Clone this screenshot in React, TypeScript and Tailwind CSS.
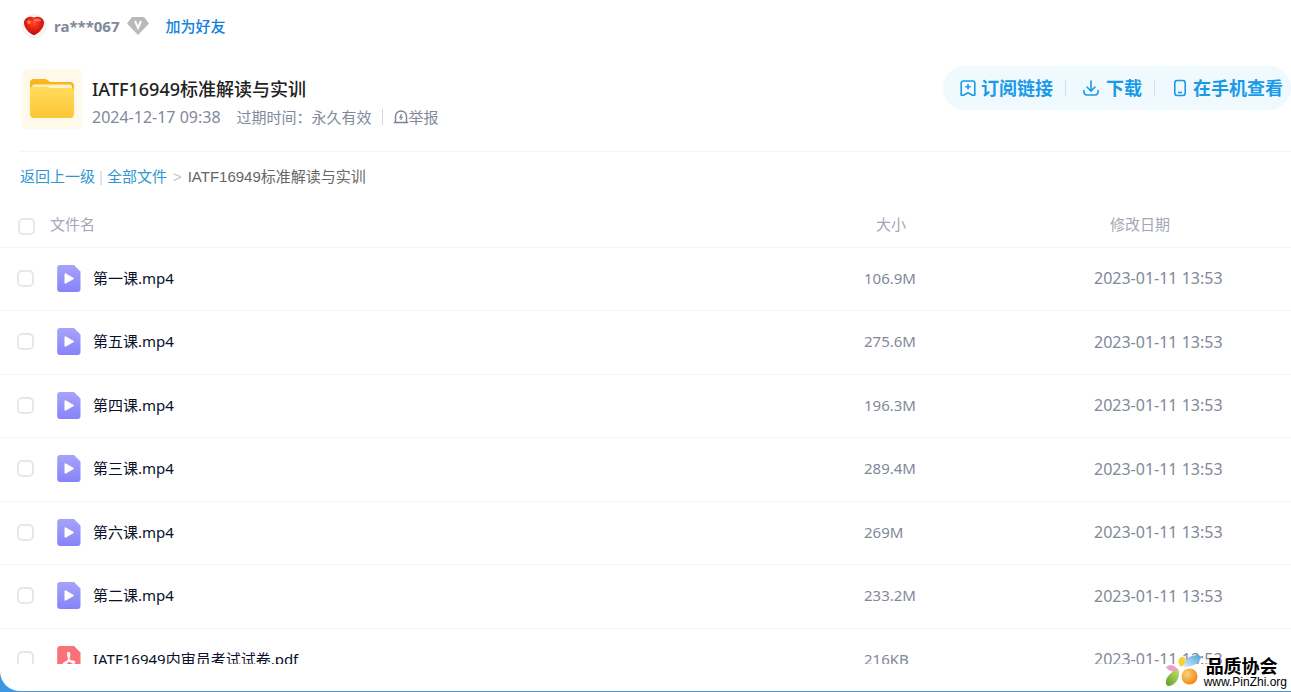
import React from "react";

const files = [
  { name: "第一课.mp4", size: "106.9M", date: "2023-01-11 13:53", type: "video" },
  { name: "第五课.mp4", size: "275.6M", date: "2023-01-11 13:53", type: "video" },
  { name: "第四课.mp4", size: "196.3M", date: "2023-01-11 13:53", type: "video" },
  { name: "第三课.mp4", size: "289.4M", date: "2023-01-11 13:53", type: "video" },
  { name: "第六课.mp4", size: "269M", date: "2023-01-11 13:53", type: "video" },
  { name: "第二课.mp4", size: "233.2M", date: "2023-01-11 13:53", type: "video" },
  { name: "IATF16949内审员考试试卷.pdf", size: "216KB", date: "2023-01-11 13:53", type: "pdf" },
];

function Avatar() {
  return (
    <svg viewBox="0 0 24 24" className="h-6 w-6">
      <defs>
        <radialGradient id="heart" cx="50%" cy="35%" r="65%">
          <stop offset="0" stopColor="#ff4a2a" />
          <stop offset="0.6" stopColor="#e01a12" />
          <stop offset="1" stopColor="#a80f0c" />
        </radialGradient>
      </defs>
      <circle cx="12" cy="12" r="11.5" fill="#fdf8f7" stroke="#e9e4e4" strokeWidth="0.8" />
      <path d="M12 21.2C8 20 1.8 14.5 2 8.6 2.2 4 7.500 1.400 12 3.400 16.500 1.400 21.800 4 22 8.600 22.200 14.500 16 20 12 21.200z" fill="url(#heart)" />
      <path d="M7 5.300l.8 1.700 1.800.2-1.300 1.300.3 1.800L7 9.400l-1.600.9.3-1.800-1.300-1.300 1.800-.2z" fill="#f8912a" />
      <path d="M10.500 4.600h1M11.800 6.400h1M11.800 8.400h1" stroke="#f8912a" strokeWidth="0.8" />
      <ellipse cx="15.500" cy="6" rx="3.500" ry="1.600" fill="#fff" opacity="0.3" />
    </svg>
  );
}

function VipBadge() {
  return (
    <svg viewBox="0 0 24 20" className="h-5 w-6">
      <path d="M6 1h12l5 6.500L12 19 1 7.500z" fill="#b9b9b9" />
      <path d="M9 5l3 7 3-7" fill="none" stroke="#fff" strokeWidth="2" />
    </svg>
  );
}

function FolderIcon() {
  return (
    <svg viewBox="0 0 46 40" className="h-10 w-[46px]">
      <defs>
        <linearGradient id="folder" x1="0" y1="0" x2="0" y2="1">
          <stop offset="0" stopColor="#ffdc5e" />
          <stop offset="1" stopColor="#fdc634" />
        </linearGradient>
      </defs>
      <path d="M1 4a4 4 0 0 1 4-4h10c2 0 3 .6 4.500 1.800C20.500 2.700 21 3 23 3h18a4 4 0 0 1 4 4v10H1z" fill="#fbb51c" />
      <path d="M3 8q0-2.500 3-2.500h34q3 0 3 2.500v6H3z" fill="#fff2c4" />
      <path d="M1 10q0-2.500 2.500-2.500H17c2 0 2.500 1.500 4.500 1.500H42q3 0 3 2.500V35a4 4 0 0 1-4 4H5a4 4 0 0 1-4-4z" fill="url(#folder)" />
    </svg>
  );
}

function ReportIcon() {
  return (
    <svg viewBox="0 0 16 16" className="h-4 w-4" fill="none" stroke="#7c8494" strokeWidth="1.4">
      <path d="M2.500 13V7.500a5.500 5.500 0 0 1 11 0V13M.8 13.500h14.400" />
      <path d="M8.600 5L7 8.400h2L7.600 11" strokeWidth="1.2" />
    </svg>
  );
}

function SubscribeIcon() {
  return (
    <svg viewBox="0 0 18 18" className="h-[18px] w-[18px]" fill="none" stroke="#199ae8" strokeWidth="1.6" strokeLinejoin="round">
      <path d="M2.200 16.200V4a2 2 0 0 1 2-2h9.600a2 2 0 0 1 2 2v12.200h-2.300L9 13.800l-4.500 2.400z" />
      <path d="M9 5v5.500M6.300 7.800h5.400" />
    </svg>
  );
}

function DownloadIcon() {
  return (
    <svg viewBox="0 0 18 18" className="h-[18px] w-[18px]" fill="none" stroke="#199ae8" strokeWidth="1.6" strokeLinecap="round">
      <path d="M9 2v9.500M5 8l4 4 4-4M1.800 11.500c0 3 1 4.500 3.200 4.500h8c2.200 0 3.200-1.500 3.200-4.500" />
    </svg>
  );
}

function PhoneIcon() {
  return (
    <svg viewBox="0 0 18 18" className="h-[18px] w-[18px]" fill="none" stroke="#199ae8" strokeWidth="1.6">
      <rect x="3.800" y="1.500" width="10.400" height="15" rx="2.500" />
      <path d="M7 13.500h4" />
    </svg>
  );
}

function FileIcon({ type }: { type: string }) {
  const video = type === "video";
  return (
    <svg viewBox="0 0 24 27" className="h-[27px] w-6 shrink-0">
      <defs>
        <linearGradient id="video" x1="0" y1="0" x2="0" y2="1">
          <stop offset="0" stopColor="#a7a3fb" />
          <stop offset="1" stopColor="#8683f8" />
        </linearGradient>
      </defs>
      <path d="M3 0h14l6.500 6.500V24a3 3 0 0 1-3 3H3.200a3 3 0 0 1-3-3V3a3 3 0 0 1 3-3z" fill={video ? "url(#video)" : "#fb7178"} />
      {video ? (
        <path d="M7.500 9.200c0-.9.700-1.200 1.400-.8l7.400 4.300c.7.400.7 1.100 0 1.500l-7.400 4.300c-.7.400-1.400 0-1.400-.8z" fill="#fff" />
      ) : (
        <path d="M11.500 6.500c1.600 0 1.200 4-.2 7.500-1 2.600-3 5-4.300 4.800-1.700-.3.500-2.900 4.500-3.600 3.600-.6 6.700.4 6 1.500-.8 1.200-4-.6-5.400-3.400-1.200-2.500-1.800-6.800-.6-6.800z" fill="none" stroke="#fff" strokeWidth="1.500" />
      )}
    </svg>
  );
}

function Checkbox({ label }: { label: string }) {
  return (
    <input
      type="checkbox"
      aria-label={label}
      className="block h-[17px] w-[17px] appearance-none rounded-[5px] border-2 border-[#e6e7ea] bg-white checked:bg-[#199ae8]"
    />
  );
}

function Watermark() {
  return (
    <div className="absolute right-1 bottom-1 flex items-end">
      <svg viewBox="0 0 38 34" className="h-[34px] w-[38px]">
        <defs>
          <linearGradient id="petal-blue" x1="0" y1="1" x2="1" y2="0">
            <stop offset="0" stopColor="#d3eafa" />
            <stop offset="1" stopColor="#4ba3dc" />
          </linearGradient>
          <linearGradient id="petal-green" x1="1" y1="0" x2="0" y2="1">
            <stop offset="0" stopColor="#c9de6c" />
            <stop offset="1" stopColor="#5a9e28" />
          </linearGradient>
          <radialGradient id="petal-orange" cx="35%" cy="35%" r="65%">
            <stop offset="0" stopColor="#fdd27c" />
            <stop offset="1" stopColor="#f08c1a" />
          </radialGradient>
        </defs>
        <path d="M16 13c-3-3-4-8 0-10 5-1 6 4 3 8z" fill="#f8d23d" />
        <path d="M19 13c0-6 4-11 10-11.500 4-.5 7 0 7 1.500 0 5-8 10-17 10z" fill="url(#petal-blue)" />
        <path d="M14 17C9 19 3 17 1 13c4-3 10-2 13 4z" fill="#ee9fc5" />
        <path d="M14 16c1.500 8-4 16-11 16-5-2-1-15 11-16z" fill="url(#petal-green)" />
        <ellipse cx="24.500" cy="22.500" rx="8" ry="8" fill="url(#petal-orange)" />
      </svg>
      <div className="flex flex-col pl-px text-black">
        <span className="pl-0.5 text-lg leading-5 font-bold">品质协会</span>
        <span className="font-['Liberation_Sans',sans-serif] text-xs leading-3">www.PinZhi.org</span>
      </div>
    </div>
  );
}

export default function App() {
  return (
    <div className="relative h-screen bg-[#3c97e2] pb-px font-['Noto_Sans','Noto_Sans_CJK_SC',sans-serif] text-[15px] text-[#818999]">
      <main className="flex h-full flex-col overflow-hidden rounded-bl-[20px] bg-white pb-[27px]">
        {/* User */}
        <div className="flex h-[54px] shrink-0 items-center pb-0.5 pl-[22px]">
          <Avatar />
          <span className="ml-2 font-bold">ra***067</span>
          <span className="ml-1.5">
            <VipBadge />
          </span>
          <a href="#" className="ml-4 font-medium text-[#1583dd]">加为好友</a>
        </div>

        {/* Share title */}
        <header className="ml-5 flex h-[98px] shrink-0 items-center justify-between border-b border-[#f3f4f6] pb-1.5">
          <div className="flex items-start">
            <div className="ml-0.5 flex h-[60px] w-[60px] items-center justify-center rounded bg-[#fff9ea]">
              <FolderIcon />
            </div>
            <div className="ml-2.5 pt-1.5">
              <h1 className="text-lg leading-7 font-medium text-[#222]">IATF16949标准解读与实训</h1>
              <div className="flex items-center leading-7">
                <time className="text-base leading-7">2024-12-17 09:38</time>
                <span className="ml-4">过期时间：永久有效</span>
                <span className="mx-2.5 h-4 border-l border-[#d3d6dc]" />
                <button className="flex items-center">
                  <ReportIcon />
                  举报
                </button>
              </div>
            </div>
          </div>
          <div className="mb-6 flex h-11 items-center rounded-full bg-[#eff9fe] pr-2 pl-4 text-lg font-bold text-[#199ae8]">
            <button className="flex items-center gap-1">
              <SubscribeIcon />
              订阅链接
            </button>
            <span className="mr-4 ml-3 h-4 border-l border-[#c4e2f3]" />
            <button className="flex items-center gap-1.5">
              <DownloadIcon />
              下载
            </button>
            <span className="mr-4 ml-3 h-4 border-l border-[#c4e2f3]" />
            <button className="flex items-center gap-1">
              <PhoneIcon />
              在手机查看
            </button>
          </div>
        </header>

        {/* Breadcrumb */}
        <nav className="flex h-[50px] shrink-0 items-center pl-5 font-['Liberation_Sans','Noto_Sans_CJK_SC',sans-serif] text-[#666]">
          <a href="#" className="text-[#2e97d3]">返回上一级</a>
          <span className="mx-1 text-[#c9d9e4]">|</span>
          <a href="#" className="text-[#2e97d3]">全部文件</a>
          <span className="mx-1.5 text-[#c4c4c4]">&gt;</span>
          <span>IATF16949标准解读与实训</span>
        </nav>

        {/* File list */}
        <div className="min-h-0 flex-1 overflow-hidden">
          <table className="w-full table-fixed border-separate border-spacing-0 text-left">
            <thead>
              <tr className="h-[46px] text-[#a2a8b5] [&>th]:border-b [&>th]:border-[#f3f4f6] [&>th]:font-normal">
                <th className="w-[50px] pt-1 pl-[18px]">
                  <Checkbox label="全选" />
                </th>
                <th>文件名</th>
                <th className="w-[230px] pl-3">大小</th>
                <th className="w-[197px] pl-4">修改日期</th>
              </tr>
            </thead>
            <tbody>
              {files.map((file) => (
                <tr
                  key={file.name}
                  className="h-16 odd:h-[63px] [&>td]:border-b [&>td]:border-[#f3f4f6] [&>td]:pb-0.5"
                >
                  <td className="pl-[17px]">
                    <Checkbox label={file.name} />
                  </td>
                  <td>
                    <a href="#" className="flex items-center gap-3 pl-[7px] text-[#08102b]">
                      <FileIcon type={file.type} />
                      {file.name}
                    </a>
                  </td>
                  <td>{file.size}</td>
                  <td className="text-base">{file.date}</td>
                </tr>
              ))}
            </tbody>
          </table>
        </div>
      </main>
      <Watermark />
    </div>
  );
}
